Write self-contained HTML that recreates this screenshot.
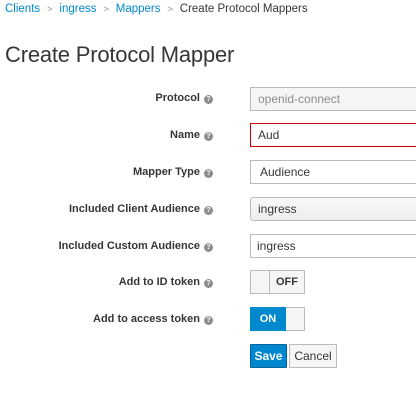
<!DOCTYPE html>
<html><head><style>
body{margin:0;width:416px;height:417px;overflow:hidden;background:#fff;font-family:"Liberation Sans",sans-serif;color:#363636;position:relative}
.a{position:absolute}
.bc{top:3px;left:5px;font-size:11.5px;white-space:nowrap}
.bc a{color:#0088ce;text-decoration:none}
.bc .s{color:#8b8d8f;margin:0 7px;font-size:9px}
h1{position:absolute;top:42px;left:5px;margin:0;font-size:22px;font-weight:normal;color:#363636;letter-spacing:-0.2px}
.lbl{right:203px;font-size:11px;font-weight:bold;white-space:nowrap;text-align:right}
.q{display:inline-block;width:9px;height:9px;border-radius:50%;background:#8b8d8f;color:#fff;font-size:7px;line-height:9px;text-align:center;margin-left:4px;vertical-align:0px}
.in{left:250px;width:180px;height:24px;border:1px solid #bbb;box-sizing:border-box;font-size:12px;line-height:22px;padding-left:7px}
.tg{left:250px;width:55px;height:24px;border:1px solid #bbb;box-sizing:border-box;font-size:11px;font-weight:bold;background:#f5f5f5}
.btn{top:344px;height:24px;box-sizing:border-box;font-size:12px;font-weight:bold;line-height:22px;text-align:center;border-radius:1px}
</style></head><body>
<div class="a bc"><a>Clients</a><span class="s">&gt;</span><a>ingress</a><span class="s">&gt;</span><a>Mappers</a><span class="s">&gt;</span>Create Protocol Mappers</div>
<h1>Create Protocol Mapper</h1>

<div class="a lbl" style="top:92px">Protocol<span class="q">?</span></div>
<div class="a in" style="top:87px;background:#f5f5f5;color:#8b8d8f">openid-connect</div>

<div class="a lbl" style="top:129px">Name<span class="q">?</span></div>
<div class="a in" style="top:123px;border-color:#c00">Aud</div>

<div class="a lbl" style="top:166px">Mapper Type<span class="q">?</span></div>
<div class="a in" style="top:160px;padding-left:9px">Audience</div>

<div class="a lbl" style="top:203px">Included Client Audience<span class="q">?</span></div>
<div class="a in" style="top:197px;border-radius:3px;background:linear-gradient(#fafafa,#ededed)">ingress</div>

<div class="a lbl" style="top:240px">Included Custom Audience<span class="q">?</span></div>
<div class="a in" style="top:234px;padding-left:6px">ingress</div>

<div class="a lbl" style="top:276px">Add to ID token<span class="q">?</span></div>
<div class="a tg" style="top:270px"><div class="a" style="left:18px;top:0;width:0;height:22px;border-left:1px solid #bbb"></div><div class="a" style="left:19px;top:0;width:34px;line-height:22px;text-align:center">OFF</div></div>

<div class="a lbl" style="top:313px">Add to access token<span class="q">?</span></div>
<div class="a tg" style="top:307px"><div class="a" style="left:-1px;top:-1px;width:36px;height:24px;background:#0088ce;color:#fff;line-height:24px;text-align:center">ON</div></div>

<div class="a btn" style="left:250px;width:37px;background:#0088ce;border:1px solid #00659c;color:#fff">Save</div>
<div class="a btn" style="left:289px;width:48px;background:#f5f5f5;border:1px solid #bbb;color:#363636;font-weight:normal">Cancel</div>
</body></html>
